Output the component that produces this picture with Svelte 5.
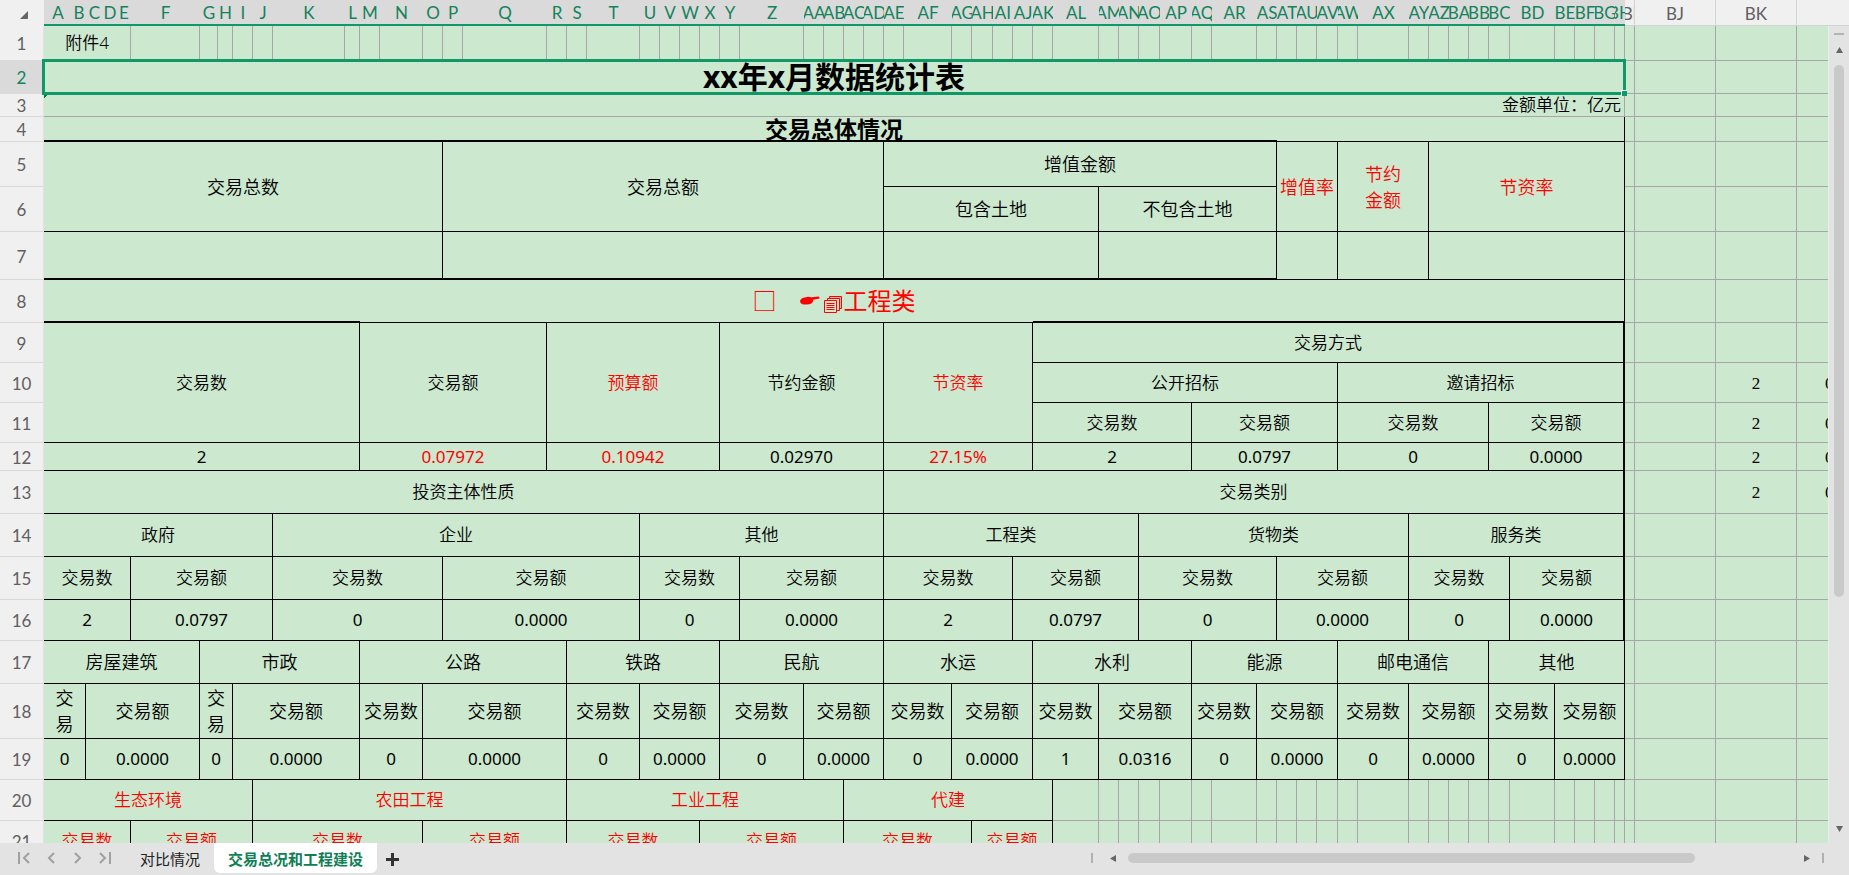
<script lang="ts">
  interface Cell {
    text: string
    cls: string
    colspan: number
    rowspan: number
  }

  const ROW_HEAD = 44
  const LAST_SELECTED = 'BH'

  const WIDTHS = [
    28, 14, 17, 14, 14, 69, 18, 15, 20, 20, 72, 15, 20, 43, 20, 20, 84, 20, 20, 53, 20, 20, 20, 20, 20, 64,
    20, 20, 20, 20, 20, 48, 20, 21, 20, 20, 20, 46, 20, 20, 21, 32, 20, 45, 20, 20, 20, 21, 20, 51, 20, 20,
    20, 20, 21, 45, 20, 20, 20, 10, 10, 81, 81, 120,
  ]

  const HEIGHTS = [35, 33, 23, 25, 45, 45, 48, 43, 40, 40, 40, 28, 43, 43, 43, 41, 43, 55, 41, 41, 41]

  function colName(i: number): string {
    const last = String.fromCharCode(65 + (i % 26))
    return i < 26 ? last : colName(Math.floor(i / 26) - 1) + last
  }

  const cols = WIDTHS.map((w, i) => ({ name: colName(i), width: w }))
  const index = new Map(cols.map((c, i) => [c.name, i]))
  const lastSelected = index.get(LAST_SELECTED)!
  const tableWidth = WIDTHS.reduce((a, b) => a + b, ROW_HEAD)

  // range, text, classes
  const MERGES: [string, string, string?][] = [
    ['A1:E1', '附件4', 'plain'],
    ['A2:BH2', 'xx年x月数据统计表', 'plain title selected'],
    ['A3:BH3', '金额单位：亿元', 'plain unit'],
    ['A4:BH4', '交易总体情况', 'subtitle'],

    ['A5:O6', '交易总数', 'lg thick-top'],
    ['P5:AD6', '交易总额', 'lg thick-top'],
    ['AE5:AS5', '增值金额', 'lg thick-top'],
    ['AT5:AV6', '增值率', 'lg red'],
    ['AW5:AY6', '节约\n金额', 'lg red'],
    ['AZ5:BH6', '节资率', 'lg red'],
    ['AE6:AL6', '包含土地', 'lg'],
    ['AM6:AS6', '不包含土地', 'lg'],
    ['A7:O7', '', 'thick-bottom'],
    ['P7:AD7', '', 'thick-bottom'],
    ['AE7:AL7', '', 'thick-bottom'],
    ['AM7:AS7', '', 'thick-bottom'],
    ['AT7:AV7', ''],
    ['AW7:AY7', ''],
    ['AZ7:BH7', ''],
    ['A8:BH8', '工程类', 'section red'],

    ['A9:L11', '交易数', 'thick-top'],
    ['M9:Q11', '交易额'],
    ['R9:X11', '预算额', 'red'],
    ['Y9:AD11', '节约金额'],
    ['AE9:AJ11', '节资率', 'red'],
    ['AK9:BH9', '交易方式', 'thick-top thick-right'],
    ['AK10:AV10', '公开招标'],
    ['AW10:BH10', '邀请招标', 'thick-right'],
    ['AK11:AP11', '交易数'],
    ['AQ11:AV11', '交易额'],
    ['AW11:BB11', '交易数'],
    ['BC11:BH11', '交易额', 'thick-right'],
    ['A12:L12', '2'],
    ['M12:Q12', '0.07972', 'red'],
    ['R12:X12', '0.10942', 'red'],
    ['Y12:AD12', '0.02970'],
    ['AE12:AJ12', '27.15%', 'red'],
    ['AK12:AP12', '2'],
    ['AQ12:AV12', '0.0797'],
    ['AW12:BB12', '0'],
    ['BC12:BH12', '0.0000', 'thick-right'],

    ['A13:AD13', '投资主体性质'],
    ['AE13:BH13', '交易类别', 'thick-right'],
    ['A14:J14', '政府'],
    ['K14:T14', '企业'],
    ['U14:AD14', '其他'],
    ['AE14:AN14', '工程类'],
    ['AO14:AX14', '货物类'],
    ['AY14:BH14', '服务类', 'thick-right'],
  ]

  // Rows that repeat a count / amount pair
  function addRow(row: number, starts: string, end: string, texts: string[], cls = '', lastCls = '') {
    const from = starts.split(' ')
    from.forEach((name, i) => {
      const to = i + 1 < from.length ? colName(index.get(from[i + 1])! - 1) : end
      const extra = i === from.length - 1 ? ` ${lastCls}` : ''
      MERGES.push([`${name}${row}:${to}${row}`, texts[i], cls + extra])
    })
  }

  const pairs = (n: number) => Array.from({ length: n * 2 }, (_, i) => (i % 2 ? '交易额' : '交易数'))

  const INVEST = 'A F K P U Z AE AJ AO AT AY BD'
  const FIELDS = 'A G M S Y AE AK AQ AW BC'
  const FIELD_PAIRS = 'A C G I M O S U Y AA AE AG AK AM AQ AS AW AY BC BE'

  addRow(15, INVEST, 'BH', pairs(6), '', 'thick-right')
  addRow(
    16, INVEST, 'BH',
    ['2', '0.0797', '0', '0.0000', '0', '0.0000', '2', '0.0797', '0', '0.0000', '0', '0.0000'],
    '', 'thick-right',
  )
  addRow(
    17, FIELDS, 'BH',
    ['房屋建筑', '市政', '公路', '铁路', '民航', '水运', '水利', '能源', '邮电通信', '其他'],
    'lg',
  )
  addRow(
    18, FIELD_PAIRS, 'BH',
    pairs(10).map((t, i) => (i === 0 || i === 2 ? '交\n易' : t)),
    'lg',
  )
  addRow(
    19, FIELD_PAIRS, 'BH',
    Array.from({ length: 20 }, (_, i) => (i === 12 ? '1' : i === 13 ? '0.0316' : i % 2 ? '0.0000' : '0')),
  )
  addRow(20, 'A J S AC', 'AK', ['生态环境', '农田工程', '工业工程', '代建'], 'red')
  addRow(21, 'A F J O S X AC AH', 'AK', pairs(4), 'red')

  for (const row of [10, 11, 12, 13]) {
    MERGES.push([`BK${row}:BK${row}`, '2', 'plain serif'])
    MERGES.push([`BL${row}:BL${row}`, '0', 'plain serif overflowing'])
  }

  function buildRows() {
    const grid: (Cell | null)[][] = HEIGHTS.map(() =>
      cols.map(() => ({ text: '', cls: 'plain', colspan: 1, rowspan: 1 })),
    )
    for (const [range, text, base = ''] of MERGES) {
      const [, c1, r1, c2, r2] = range.match(/^([A-Z]+)(\d+):([A-Z]+)(\d+)$/)!
      const left = index.get(c1)!
      const right = index.get(c2)!
      const cls = /^[\d.%]+$/.test(text) ? `${base} num` : base
      for (let r = +r1; r <= +r2; r++) {
        for (let c = left; c <= right; c++) grid[r - 1][c] = null
      }
      grid[+r1 - 1][left] = { text, cls, colspan: right - left + 1, rowspan: +r2 - +r1 + 1 }
    }
    return grid.map((cells, i) => ({
      number: i + 1,
      height: HEIGHTS[i],
      cells: cells.filter((c) => c !== null) as Cell[],
    }))
  }

  const rows = buildRows()

  const NAV = [
    { label: '第一个工作表', d: 'M2 1v12M12 2L7 7l5 5' },
    { label: '上一个工作表', d: 'M10 2L5 7l5 5' },
    { label: '下一个工作表', d: 'M4 2l5 5-5 5' },
    { label: '最后一个工作表', d: 'M2 2l5 5-5 5M12 1v12' },
  ]

  let active = $state('交易总况和工程建设')
</script>

<div class="app">
  <div class="workspace">
    <div class="sheet">
      <table style="width: {tableWidth}px">
        <colgroup>
          <col style="width: {ROW_HEAD}px" />
          {#each cols as col}
            <col style="width: {col.width}px" />
          {/each}
        </colgroup>
        <thead>
          <tr>
            <th class="corner">
              <svg width="8" height="8" viewBox="0 0 8 8"><path d="M8 0v7q0 1-1 1H0z" fill="#666" /></svg>
            </th>
            {#each cols as col, i}
              <th class="col-head" class:on={i <= lastSelected} class:edge={i > lastSelected} scope="col">
                <span>{col.name}</span>
              </th>
            {/each}
          </tr>
        </thead>
        <tbody>
          {#each rows as row}
            <tr style="height: {row.height}px">
              <th class="row-head" class:on={row.number === 2} class:first={row.number === 1} scope="row">
                {row.number}
              </th>
              {#each row.cells as cell}
                <td class={cell.cls} colspan={cell.colspan} rowspan={cell.rowspan}>
                  {#if cell.cls.includes('section')}
                    <div class="section-line">
                      <span class="box">□</span>
                      <svg width="20" height="12" viewBox="0 0 20 12">
                        <path
                          d="M0 6C1 3 4 2.500 7 2 9 1.500 10 2.300 11.500 2.200L18.500 1.600Q20 2 19.500 3.400L13 4.800Q14 6 12.500 6.900 12.500 8.200 11 8.500 10.500 9.500 8.500 9.300 5 9.800 2.500 9.200 0 8.600 0 6z"
                          fill="#f00"
                        />
                      </svg>
                      <svg class="pages" width="18" height="18" viewBox="0 0 18 18" fill="#cce8cf" stroke="#f00">
                        <path d="M5.500 .5h12v12h-12z" fill="#e6b8a2" />
                        <path d="M3.500 2.500h12v12h-12z" />
                        <path d="M.5 4.500h12v12H.5z" />
                        <path d="M2.500 7.500h8M2.500 9.500h8M2.500 11.500h8M2.500 13.500h8" />
                      </svg>
                      <span>{cell.text}</span>
                    </div>
                  {:else}
                    {cell.text}
                  {/if}
                  {#if cell.cls.includes('selected')}
                    <div class="selection"><i class="handle"></i></div>
                  {/if}
                </td>
              {/each}
            </tr>
          {/each}
        </tbody>
      </table>
    </div>

    <div class="rail">
      <div class="rail-head"></div>
      <div class="vscroll">
        <i class="split"></i>
        <button aria-label="向上滚动">
          <svg width="7" height="6" viewBox="0 0 7 6"><path d="M3.500 0L7 6H0z" fill="#666" /></svg>
        </button>
        <div class="track"><div class="thumb"></div></div>
        <button aria-label="向下滚动">
          <svg width="7" height="6" viewBox="0 0 7 6"><path d="M3.500 6L0 0h7z" fill="#666" /></svg>
        </button>
      </div>
    </div>
  </div>

  <div class="bottom">
    <div class="nav">
      {#each NAV as item}
        <button aria-label={item.label}>
          <svg width="14" height="14" viewBox="0 0 14 14" fill="none" stroke="#a0a0a0" stroke-width="2">
            <path d={item.d} />
          </svg>
        </button>
      {/each}
    </div>
    <div class="tabs">
      {#each ['对比情况', '交易总况和工程建设'] as name}
        <button class="tab" class:active={active === name} onclick={() => (active = name)}>{name}</button>
      {/each}
      <button class="add" aria-label="新建工作表">
        <svg width="13" height="13" viewBox="0 0 13 13" stroke="#333" stroke-width="3"><path d="M6.500 0v13M0 6.500h13" /></svg>
      </button>
    </div>
    <div class="hscroll">
      <i class="split"></i>
      <button aria-label="向左滚动">
        <svg width="6" height="7" viewBox="0 0 6 7"><path d="M0 3.500L6 0v7z" fill="#666" /></svg>
      </button>
      <div class="track"><div class="thumb"></div></div>
      <button aria-label="向右滚动">
        <svg width="6" height="7" viewBox="0 0 6 7"><path d="M6 3.500L0 7V0z" fill="#666" /></svg>
      </button>
      <i class="split"></i>
    </div>
  </div>
</div>

<style>
  .app {
    display: flex;
    flex-direction: column;
    height: 100vh;
    overflow: hidden;
    background: #e3e3e3;
    font-family: 'Noto Sans', 'Noto Sans CJK SC', sans-serif;
    color: #000;
  }

  .workspace {
    display: flex;
    flex: 1;
    min-height: 0;
  }

  .sheet {
    flex: 1;
    min-width: 0;
    overflow: hidden;
    background: #cce8cf;
  }

  table {
    table-layout: fixed;
    border-collapse: separate;
    border-spacing: 0;
  }

  th,
  td {
    box-sizing: border-box;
    padding: 0;
    text-align: center;
    vertical-align: middle;
  }

  thead tr {
    height: 26px;
  }

  th {
    padding-top: 2px;
    font-family: Lato, 'Liberation Sans', sans-serif;
    font-size: 17px;
    font-weight: 400;
    line-height: 20px;
    color: #606060;
    background: #f0f0f0;
  }

  .corner {
    padding-left: 3px;
    line-height: 8px;
  }

  .col-head {
    border-bottom: 1px solid #d4d4d4;
  }

  .col-head.edge {
    border-right: 1px solid #d4d4d4;
  }

  .col-head.on {
    color: #12835a;
    background: #dadada;
    border-bottom: 2px solid #109868;
  }

  .col-head span {
    display: flex;
    justify-content: center;
    overflow: hidden;
  }

  .row-head {
    border-right: 1px solid #e2e2e2;
    border-bottom: 1px solid #d8d8d8;
  }

  .row-head.first {
    border-bottom-color: #dadada;
  }

  .row-head.on {
    color: #12835a;
    background: #dadada;
    border-color: #dadada;
  }

  td {
    border-right: 1px solid #000;
    border-bottom: 1px solid #000;
    font-size: 17px;
    font-weight: 350;
    line-height: 20px;
    white-space: pre-line;
  }

  .num {
    font-weight: 400;
  }

  .plain {
    border-color: #a6a6a6;
  }

  .red {
    color: #f00;
  }

  .lg {
    font-size: 18px;
    line-height: 26px;
  }

  .thick-top {
    box-shadow: 0 -2px 0 #000;
  }

  .thick-bottom {
    border-bottom-width: 2px;
  }

  .thick-right {
    border-right-width: 2px;
  }

  .title {
    font-size: 30px;
    font-weight: 700;
    line-height: 30px;
  }

  .subtitle {
    font-size: 23px;
    font-weight: 700;
    line-height: 23px;
  }

  .unit {
    padding-right: 3px;
    text-align: right;
    background: linear-gradient(135deg, #0a7d1c 3px, transparent 3px);
  }

  .serif {
    padding-top: 2px;
    font-family: 'Liberation Serif', serif;
    font-weight: 400;
  }

  .overflowing {
    padding-left: 28px;
    text-align: left;
  }

  .section-line {
    display: flex;
    align-items: center;
    justify-content: center;
    font-size: 24px;
    font-weight: 400;
    line-height: 30px;
  }

  .section-line .box {
    margin-right: 23px;
  }

  .section-line .pages {
    margin: 8px 2px 0 4px;
  }

  .selected {
    position: relative;
    z-index: 1;
  }

  .selection {
    position: absolute;
    inset: -2px;
    border: 3px solid #109868;
  }

  .handle {
    position: absolute;
    right: -4px;
    bottom: -4px;
    width: 5px;
    height: 5px;
    background: #109868;
    border-top: 1px solid #fff;
    border-left: 1px solid #fff;
  }

  .rail {
    display: flex;
    flex-direction: column;
    width: 21px;
  }

  .rail-head {
    height: 25px;
    background: #f0f0f0;
    border-bottom: 1px solid #d4d4d4;
  }

  .vscroll {
    display: flex;
    flex: 1;
    flex-direction: column;
    align-items: center;
    padding: 7px 0 11px;
    border-left: 1px solid #ececec;
  }

  .vscroll .split {
    width: 10px;
    height: 2px;
    margin-bottom: 12px;
    background: #b4b4b4;
  }

  .vscroll .track {
    flex: 1;
    width: 10px;
    margin: 12px 0;
  }

  .thumb {
    height: 10px;
    background: #c9c9c9;
    border-radius: 5px;
  }

  .vscroll .thumb {
    height: 71%;
  }

  button {
    display: flex;
    align-items: center;
    justify-content: center;
    padding: 0;
    border: none;
    background: none;
    font: inherit;
    cursor: pointer;
  }

  .bottom {
    display: flex;
    height: 32px;
    background: #e3e3e3;
  }

  .nav {
    display: flex;
    align-items: center;
    gap: 13px;
    padding: 0 0 2px 17px;
  }

  .tabs {
    display: flex;
    flex: 1;
    align-items: flex-start;
    padding-left: 14px;
  }

  .tab {
    height: 30px;
    padding: 0 14px;
    font-size: 15px;
    color: #222;
    white-space: nowrap;
  }

  .tab.active {
    color: #0f8055;
    font-weight: 700;
    background: #fff;
    border-radius: 0 0 6px 6px;
  }

  .add {
    height: 32px;
    padding-left: 9px;
  }

  .hscroll {
    display: flex;
    box-sizing: border-box;
    align-items: center;
    width: 41%;
    padding: 0 25px 2px 0;
  }

  .hscroll .split {
    width: 2px;
    height: 10px;
    background: #b0b0b0;
  }

  .hscroll button {
    margin: 0 12px 0 17px;
  }

  .hscroll .track {
    flex: 1;
  }

  .hscroll .thumb {
    width: 86%;
  }
</style>
